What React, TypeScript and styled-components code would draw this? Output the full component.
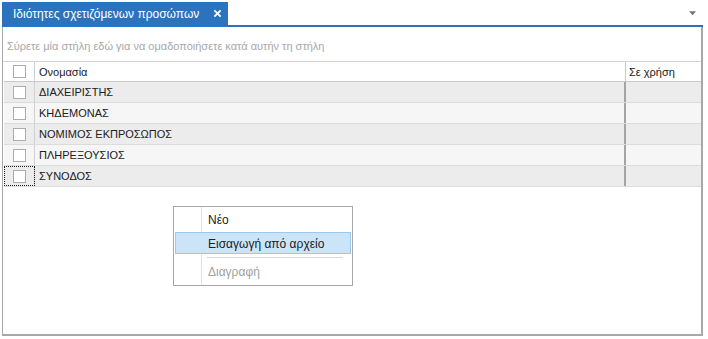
import styled, { createGlobalStyle } from 'styled-components'

const GlobalStyle = createGlobalStyle`
  html, body {
    margin: 0;
    padding: 0;
    background: #ffffff;
  }
  body {
    font-family: "Liberation Sans", Arial, sans-serif;
    font-size: 11px;
    color: #202020;
  }
`

const rows = ['ΔΙΑΧΕΙΡΙΣΤΗΣ', 'ΚΗΔΕΜΟΝΑΣ', 'ΝΟΜΙΜΟΣ ΕΚΠΡΟΣΩΠΟΣ', 'ΠΛΗΡΕΞΟΥΣΙΟΣ', 'ΣΥΝΟΔΟΣ']

export default function App () {
  return (
    <Window>
      <GlobalStyle />
      <TabStrip>
        <Tab>
          <span>Ιδιότητες σχετιζόμενων προσώπων</span>
          <CloseIcon viewBox="0 0 10 10">
            <path d="M1.5 1.5 L8.5 8.5 M8.5 1.5 L1.5 8.5" />
          </CloseIcon>
        </Tab>
        <DropArrow viewBox="0 0 8 5">
          <path d="M0 0 H8 L4 4.5 Z" />
        </DropArrow>
      </TabStrip>
      <Panel>
        <GroupPanel>Σύρετε μία στήλη εδώ για να ομαδοποιήσετε κατά αυτήν τη στήλη</GroupPanel>
        <Grid>
          <HeaderRow>
            <CheckCell><CheckBox /></CheckCell>
            <NameCell>Ονομασία</NameCell>
            <UseCell>Σε χρήση</UseCell>
          </HeaderRow>
          {rows.map((name, i) => (
            <DataRow key={name} $alt={i % 2 === 1}>
              <CheckCell $focused={i === rows.length - 1}><CheckBox /></CheckCell>
              <NameCell>{name}</NameCell>
              <UseCell />
            </DataRow>
          ))}
        </Grid>
        <Menu>
          <MenuItem>Νέο</MenuItem>
          <MenuItem $active>Εισαγωγή από αρχείο</MenuItem>
          <MenuSeparator />
          <MenuItem $disabled>Διαγραφή</MenuItem>
        </Menu>
      </Panel>
    </Window>
  )
}

const Window = styled.div`
  width: 708px;
  height: 339px;
  display: flex;
  flex-direction: column;
  box-sizing: border-box;
  padding: 2px 5px 3px 2px;
`

const TabStrip = styled.div`
  height: 23px;
  display: flex;
  align-items: flex-start;
  border-bottom: 2px solid #2b73bd;
`

const Tab = styled.div`
  height: 23px;
  width: 226px;
  box-sizing: border-box;
  background: #2b73bd;
  color: #ffffff;
  display: flex;
  align-items: center;
  gap: 14px;
  padding-left: 11px;
  font-size: 12px;
  white-space: nowrap;
`

const CloseIcon = styled.svg`
  width: 9px;
  height: 9px;
  stroke: #ffffff;
  stroke-width: 2;
  fill: none;
`

const DropArrow = styled.svg`
  width: 7px;
  height: 5px;
  fill: #777777;
  margin-left: auto;
  margin-right: 7px;
  margin-top: 9px;
`

const Panel = styled.div`
  flex: 1;
  display: flex;
  flex-direction: column;
  border-left: 1px solid #a8a8a8;
  border-right: 2px solid #a8a8a8;
  border-bottom: 2px solid #a8a8a8;
  position: relative;
`

const GroupPanel = styled.div`
  height: 35px;
  box-sizing: border-box;
  border-bottom: 1px solid #d4d4d4;
  display: flex;
  align-items: center;
  padding: 3px 0 0 4px;
  color: #a8a8a8;
  font-size: 11px;
`

const Grid = styled.div`
  display: flex;
  flex-direction: column;
  margin-left: 1px;
`

const HeaderRow = styled.div`
  display: grid;
  grid-template-columns: 31px 591px 1fr;
  height: 20px;
  background: #ffffff;
  border-bottom: 1px solid #c8c8c8;
  box-sizing: border-box;
`

const DataRow = styled.div<{ $alt?: boolean }>`
  display: grid;
  grid-template-columns: 31px 591px 1fr;
  height: 21px;
  box-sizing: border-box;
  background: ${p => (p.$alt ? '#f6f6f6' : '#ececec')};
  border-bottom: 1px solid #dcdcdc;
`

const CheckCell = styled.div<{ $focused?: boolean }>`
  display: flex;
  align-items: center;
  justify-content: center;
  border-right: 1px solid #d0d0d0;
  outline: ${p => (p.$focused ? '1px dotted #202020' : 'none')};
  outline-offset: -1px;
`

const CheckBox = styled.span`
  width: 13px;
  height: 13px;
  box-sizing: border-box;
  border: 1px solid #acacac;
  background: #ffffff;
`

const NameCell = styled.div`
  display: flex;
  align-items: center;
  padding-left: 4px;
  border-right: 2px solid #a4a4a4;
  white-space: nowrap;
  ${HeaderRow} & {
    border-right: 1px solid #c8c8c8;
  }
`

const UseCell = styled.div`
  display: flex;
  align-items: center;
  padding-left: 3px;
`

const Menu = styled.div`
  position: absolute;
  left: 170px;
  top: 179px;
  width: 180px;
  height: 80px;
  box-sizing: border-box;
  border: 1px solid #a8a8a8;
  background: #ffffff;
  display: flex;
  flex-direction: column;
  padding: 1px;
  background-image: linear-gradient(to right, transparent 27px, #e2e2e2 27px, #e2e2e2 28px, transparent 28px);
`

const MenuItem = styled.div<{ $active?: boolean; $disabled?: boolean }>`
  height: 22px;
  box-sizing: border-box;
  display: flex;
  align-items: center;
  padding: 1px 0 0 32px;
  font-size: 12px;
  color: ${p => (p.$disabled ? '#a0a0a0' : '#202020')};
  background: ${p => (p.$active ? '#cce4f7' : 'transparent')};
  border: 1px solid ${p => (p.$active ? '#99c9ef' : 'transparent')};
  margin-top: ${p => (p.$active ? '2px' : '0')};
`

const MenuSeparator = styled.div`
  height: 1px;
  background: #d8d8d8;
  margin: 3px 8px 2px 32px;
`
